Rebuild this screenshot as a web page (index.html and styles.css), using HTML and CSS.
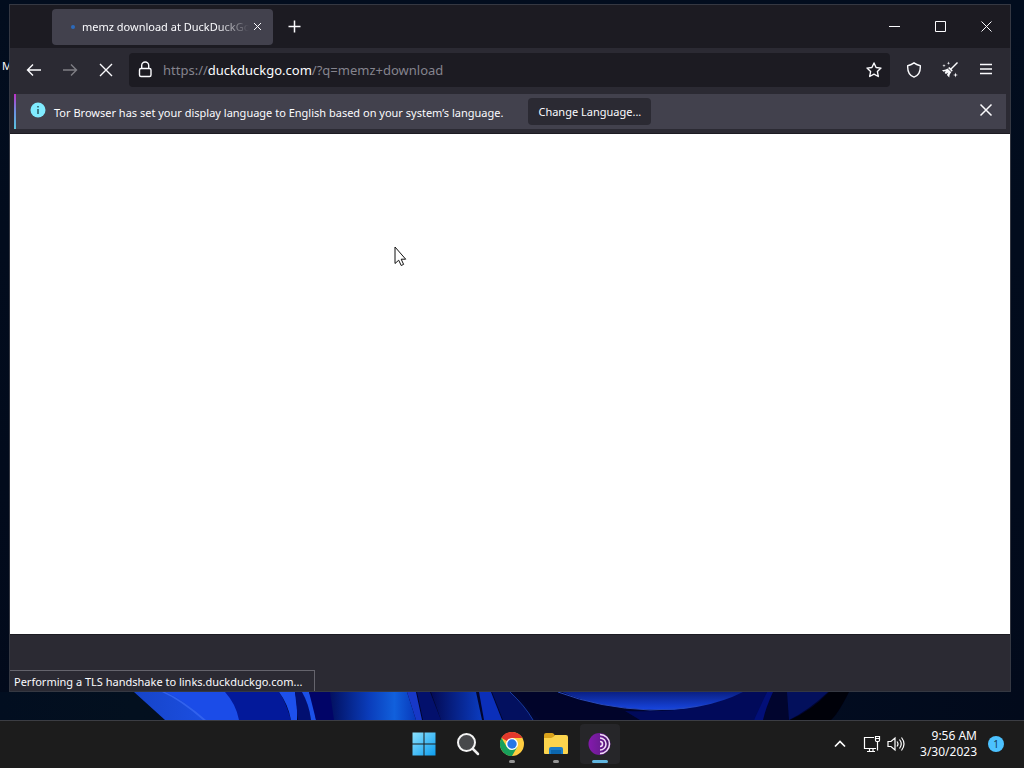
FILE: index.html
```html
<!DOCTYPE html>
<html lang="en">
<head>
<meta charset="utf-8">
<title>memz download at DuckDuckGo</title>
<link rel="stylesheet" href="styles.css">
</head>
<body>
<main class="desktop">
  <svg class="wallpaper" viewBox="0 0 1024 28" preserveAspectRatio="none" aria-hidden="true">
    <defs>
      <linearGradient id="sky"><stop offset="0" stop-color="#020e20"/><stop offset=".13" stop-color="#03101f"/><stop offset=".8" stop-color="#020c20"/><stop offset="1" stop-color="#020a1b"/></linearGradient>
      <linearGradient id="p1"><stop offset="0" stop-color="#1644c8"/><stop offset="1" stop-color="#1f55f0"/></linearGradient>
      <linearGradient id="p2"><stop offset="0" stop-color="#021060"/><stop offset=".45" stop-color="#0a3cba"/><stop offset=".75" stop-color="#1160dc"/><stop offset="1" stop-color="#0838ba"/></linearGradient>
      <linearGradient id="p3"><stop offset="0" stop-color="#030a54"/><stop offset="1" stop-color="#0b3cc0"/></linearGradient>
      <linearGradient id="p4" x2="0" y2="1"><stop offset="0" stop-color="#0a2084"/><stop offset="1" stop-color="#1746e2"/></linearGradient>
    </defs>
    <rect width="1024" height="28" fill="url(#sky)"/>
    <path d="M134 0H849Q838 22 831 28H165Z" fill="#01052e"/>
    <path d="M134 0H240L248 28H165Z" fill="url(#p1)"/>
    <path d="M166 0H225Q235 10 240 28H205Q184 8 166 0Z" fill="#1b4ce8"/>
    <path d="M165 0Q183 8 206 28H203Q180 8 162 0Z" fill="#3262ee"/>
    <path d="M225 0H279Q286 10 291 28H239Q236 12 225 0Z" fill="#03199a"/>
    <path d="M279 0H295Q298 14 297 28H291Q288 12 279 0Z" fill="#1d50ec"/>
    <path d="M295 0H303Q309 12 311 28H298Z" fill="#020f70"/>
    <path d="M302 0H309Q315 14 316 28H311Q309 12 302 0Z" fill="#1b50e8"/>
    <path d="M309 0H340V28H316Z" fill="#010467"/>
    <path d="M330 0H407L416 28H334Z" fill="url(#p2)"/>
    <path d="M407 0H416L422 28H416Z" fill="#1738c8"/>
    <path d="M417 0H430L441 28H423Z" fill="#03106c"/>
    <path d="M431 0H476L482 28H441Z" fill="url(#p3)"/>
    <path d="M479 0H491L502 28H484Z" fill="#0b2fba"/>
    <path d="M492 0H510Q525 15 533 28H503Z" fill="#03105f"/>
    <path d="M510 0Q525 14 533 28" fill="none" stroke="#173ba0"/>
    <path d="M555 0Q590 16 640 16V28H540L515 0Z" fill="#01042a"/>
    <path d="M562 0H756Q716 18 660 18Q600 17 562 0Z" fill="url(#p4)"/>
    <path d="M558 0Q600 16 650 18Q706 18 756 0" fill="none" stroke="#2848b8"/>
    <path d="M625 19Q700 22 743 0H767Q764 16 754 28H640Z" fill="#010a5a"/>
    <path d="M767 0H773Q766 15 763 28H754Z" fill="#020f78"/>
    <path d="M787 0H828Q809 18 789 28Z" fill="#03105c"/>
    <path d="M829 0H849Q838 22 831 28H790Q812 18 829 0Z" fill="#000109"/>
  </svg>
  <span class="shortcut">M</span>

  <section class="window" aria-label="Tor Browser">
    <header class="tabstrip">
      <div class="tab">
        <span class="loading"></span>
        <span class="tab-title">memz download at DuckDuckGo</span>
        <button class="tab-close" aria-label="Close tab"><svg width="9" height="9" viewBox="0 0 9 9"><path d="M1 1l7 7M8 1l-7 7"/></svg></button>
      </div>
      <button class="new-tab" aria-label="New tab"><svg width="13" height="13" viewBox="0 0 13 13"><path d="M6.500 .5v12M.5 6.500h12"/></svg></button>
      <div class="caption">
        <button aria-label="Minimize"><svg width="11" height="11" viewBox="0 0 11 11"><path d="M0 5.500h11"/></svg></button>
        <button aria-label="Maximize"><svg width="11" height="11" viewBox="0 0 11 11"><path d="M.5 .5h10v10H.5z"/></svg></button>
        <button aria-label="Close"><svg width="11" height="11" viewBox="0 0 11 11"><path d="M.5 .5l10 10M10.500 .5l-10 10"/></svg></button>
      </div>
    </header>

    <nav class="toolbar">
      <button class="tool" aria-label="Back"><svg width="16" height="16" viewBox="0 0 16 16"><path d="M15 8H1.500M7 2.500L1.500 8 7 13.500"/></svg></button>
      <button class="tool" aria-label="Forward" disabled><svg width="16" height="16" viewBox="0 0 16 16"><path d="M1 8h13.500M9 2.500L14.500 8 9 13.500"/></svg></button>
      <button class="tool" aria-label="Stop"><svg width="16" height="16" viewBox="0 0 16 16"><path d="M2 2l12 12M14 2L2 14"/></svg></button>
      <div class="urlbar">
        <button class="lock" aria-label="Site information"><svg width="16" height="18" viewBox="0 0 16 18"><rect x="2.500" y="7.500" width="11.500" height="8" rx="1.500"/><path d="M4.700 7.500V4.500a3.500 3.500 0 0 1 7 0v3"/></svg></button>
        <a class="url" href="https://duckduckgo.com/?q=memz+download">https://<span class="domain">duckduckgo.com</span>/?q=memz+download</a>
        <button class="star" aria-label="Bookmark this page"><svg width="16" height="16" viewBox="0 0 16 16"><path d="M8 1l2.100 4.500 4.900.6-3.600 3.400.9 5L8 12.200 3.700 14.500l.9-5L1 6.100l4.900-.6z"/></svg></button>
      </div>
      <button class="tool" aria-label="Security level"><svg width="16" height="16" viewBox="0 0 16 16"><path d="M8 .9C6.300 2.300 4 3.200 1.700 3.700c-.3 5.300 1.700 9.800 6.300 11.400 4.600-1.600 6.600-6.100 6.300-11.400C12 3.200 9.700 2.300 8 .9z"/></svg></button>
      <button class="tool" aria-label="New identity"><svg width="18" height="18" viewBox="0 0 18 18"><path d="M16.500 1.500L9.500 8.500"/><path class="solid" d="M6.500 7.500C5 8.500 3 9 1 9l1.500 1.700 2.200-.6-1 1.900 1.200 1.100 2.400-1.700-1.400 2.700L8.300 16.500c0-2.500.8-4 2-5.300zM7 7l3.800 3.800.9-1.400L8.500 6zM3 3l.4 1.300 1.300.4-1.300.4L3 6.400l-.4-1.300-1.300-.4 1.300-.4zM7.500 .5l.4 1.300 1.300.4-1.300.4-.4 1.300-.4-1.300-1.300-.4 1.300-.4zM14.500 11.500l.6 1.900 1.900.6-1.900.6-.6 1.900-.6-1.900L12 14l1.900-.6z"/></svg></button>
      <button class="tool" aria-label="Open menu"><svg class="lines" width="16" height="16" viewBox="0 0 16 16"><path d="M2 2.500h12M2 7h12M2 11.500h12"/></svg></button>
    </nav>

    <div class="notice">
      <svg class="info" width="16" height="16" viewBox="0 0 16 16"><circle cx="8" cy="8" r="7.500" fill="#80ebff"/><path d="M8 7v5M8 4v1.500" stroke="#24575f" stroke-width="1.500"/></svg>
      <span class="notice-text">Tor Browser has set your display language to English based on your system’s language.</span>
      <button class="change">Change Language...</button>
      <button class="dismiss" aria-label="Dismiss"><svg width="14" height="14" viewBox="0 0 14 14"><path d="M1.500 1.500l11 11M12.500 1.500l-11 11"/></svg></button>
    </div>

    <div class="page"></div>
    <footer class="letterbox"><output class="status">Performing a TLS handshake to links.duckduckgo.com...</output></footer>
    <svg class="cursor" width="14" height="21" viewBox="0 0 14 21"><path d="M1 1v16.500l3.700-3.300 2.500 5.300 2.400-1.100-2.400-5.200h4.500z" fill="#fff" stroke="#111"/></svg>
  </section>
</main>

<footer class="taskbar">
  <div class="apps">
    <button class="app" aria-label="Start"><svg width="24" height="24" viewBox="0 0 24 24"><defs><linearGradient id="win" x2="1" y2="1"><stop stop-color="#8be1fd"/><stop offset="1" stop-color="#0c9df0"/></linearGradient></defs><path fill="url(#win)" d="M.5 .5h11v11H.5zM12.500 .5h11v11h-11zM.5 12.500h11v11H.5zM12.500 12.500h11v11h-11z"/></svg></button>
    <button class="app" aria-label="Search"><svg width="24" height="24" viewBox="0 0 24 24"><path d="M17 17l5 5" stroke="#eee" stroke-width="2.500" stroke-linecap="round"/><circle cx="10.500" cy="10.500" r="8.500" fill="#47484b" stroke="#f4f4f4" stroke-width="2"/></svg></button>
    <button class="app running" aria-label="Google Chrome"><svg width="24" height="24" viewBox="0 0 24 24"><circle cx="12" cy="12" r="12" fill="#ffcd40"/><path d="M12 12L1.600 6A12 12 0 0 1 22.400 6H12z" fill="#e3382c"/><path d="M1.600 6A12 12 0 0 0 12 24l5.200-9H6.800z" fill="#18a05b"/><circle cx="12" cy="12" r="6" fill="#fff"/><circle cx="12" cy="12" r="4.700" fill="#2876e5"/></svg></button>
    <button class="app running" aria-label="File Explorer"><svg width="26" height="24" viewBox="0 0 26 24"><path d="M1 7V3q0-2 2-2h6q1 0 2 1l1 2v3z" fill="#d9a21b"/><path d="M1 6h7q2 0 4-3h11q2 0 2 2v16q0 1-1 1H2q-1 0-1-1z" fill="#fbd44d"/><path d="M6 22v-5q0-2 2-2h10q2 0 2 2v5z" fill="#1a7cc8"/><path d="M8 18h10v4H8z" fill="#0b66ad"/></svg></button>
    <button class="app active" aria-label="Tor Browser"><svg width="24" height="24" viewBox="0 0 24 24"><defs><linearGradient id="tor"><stop stop-color="#8419ad"/><stop offset=".5" stop-color="#6e1c96"/><stop offset="1" stop-color="#3f105f"/></linearGradient></defs><circle cx="11.500" cy="12" r="11" fill="url(#tor)"/><path d="M12 2.500a9.500 9.500 0 0 1 0 19M12 6a6 6 0 0 1 0 12M12 9.500a2.500 2.500 0 0 1 0 5" fill="none" stroke="#f0dcf6" stroke-width="1.600"/></svg></button>
  </div>
  <div class="tray">
    <button class="tray-item" aria-label="Show hidden icons"><svg width="12" height="8" viewBox="0 0 12 8"><path d="M1 6.500l5-5 5 5" stroke-width="1.700"/></svg></button>
    <button class="tray-item system" aria-label="Network and volume">
      <svg width="18" height="18" viewBox="0 0 18 18"><path d="M11 2.500H1.500v11H13M4 16.500h8M6.500 13.500v3M10 13.500v3M14.500 7v8.500M12.500 1.500h4V5q0 1.500-1 1.500h-2q-1 0-1-1.500zM12.500 3.500h4"/></svg>
      <svg width="18" height="16" viewBox="0 0 18 16"><path d="M1 5.500h3L8 2v12l-4-3.500H1zM10 5.500q2 2.500 0 5M12.500 3.500q3.500 4.500 0 9M14.500 1.500q5 6.500 0 13"/></svg>
    </button>
    <button class="clock"><time datetime="2023-03-30T09:56">9:56 AM<br>3/30/2023</time></button>
    <button class="badge" aria-label="1 notification">1</button>
  </div>
</footer>
</body>
</html>
```
FILE: styles.css
```css
* { box-sizing: border-box; }

body {
  margin: 0;
  min-height: 100vh;
  display: flex;
  flex-direction: column;
  background: #020b1c;
  color: #fbfbfe;
  font: 11px/16px "Noto Sans", "Open Sans", sans-serif;
}

button {
  display: flex;
  align-items: center;
  justify-content: center;
  flex: none;
  margin: 0;
  padding: 0;
  border: 0;
  background: none;
  color: inherit;
  font: inherit;
}

svg { display: block; flex: none; fill: none; stroke: none; }

.desktop {
  position: relative;
  flex: 1;
  display: flex;
  padding: 4px 13px 28px 9px;
  overflow: hidden;
  background: linear-gradient(#020d1e, #020a1b);
}

.wallpaper { position: absolute; left: 0; bottom: 0; width: 100%; height: 28px; }
.shortcut { position: absolute; left: 2px; top: 58px; }

.window {
  position: relative;
  flex: 1;
  min-width: 0;
  display: flex;
  flex-direction: column;
  border: 1px solid #353842;
  background: #2b2a33;
}

.window button svg { stroke: #fbfbfe; }

.tabstrip { display: flex; align-items: center; height: 43px; padding-left: 42px; background: #1c1b22; }

.tab {
  display: flex;
  align-items: center;
  width: 221px;
  height: 36px;
  padding: 0 8px 0 19px;
  border-radius: 4px;
  background: #42414d;
}

.loading { width: 4px; height: 4px; border-radius: 50%; background: #2b69bb; }

.tab-title {
  flex: 1;
  margin-left: 7px;
  overflow: hidden;
  white-space: nowrap;
  mask-image: linear-gradient(to left, transparent, #000 32px);
}

.tab-close { width: 16px; height: 16px; }
.new-tab { width: 32px; height: 32px; margin-left: 5px; }
.new-tab svg { stroke-width: 1.5; }
.caption { display: flex; align-self: stretch; margin-left: auto; padding-right: 1px; }
.caption button { width: 46px; }

.toolbar { display: flex; align-items: center; height: 43px; padding: 0 8px; gap: 4px; }
.tool { width: 32px; height: 32px; }
.window .tool svg { stroke-width: 1.4; }
.window .tool .lines { stroke-width: 1.5; }
.tool:disabled { opacity: .4; }
.window .solid { fill: #fbfbfe; stroke: none; }

.urlbar {
  flex: 1;
  min-width: 0;
  display: flex;
  align-items: center;
  height: 34px;
  margin: 0 4px 0 3px;
  padding: 0 8px;
  border-radius: 4px;
  background: #1c1b22;
}

.window .lock svg, .window .star svg { stroke-width: 1.4; stroke-linejoin: round; }
.url { flex: 1; margin-left: 10px; overflow: hidden; color: #85848e; font-size: 13px; line-height: 20px; text-decoration: none; white-space: nowrap; }
.domain { color: #fbfbfe; }

.notice {
  display: flex;
  align-items: center;
  height: 35px;
  margin: 3px 4px 4px;
  padding: 0 12px 0 14px;
  border-left: 2px solid;
  border-image: linear-gradient(#c42bc7, #6b8fe0, #58c8dc) 1;
  background: #42414d;
}

.info, .dismiss { margin-bottom: 4px; }
.notice-text { margin-left: 8px; padding-top: 2px; }
.change { height: 27px; margin-left: 25px; padding: 0 10px; border-radius: 4px; background: #2b2a33; }
.dismiss { width: 16px; height: 16px; margin-left: auto; }
.dismiss svg { stroke-width: 1.5; }

.page { flex: 1; border-top: 1px solid #1c1b22; background: #fff; }
.letterbox { display: flex; align-items: flex-end; height: 57px; border-top: 1px solid #1c1b22; }
.status { padding: 3px 12px 1px 4px; border: 1px solid #65646d; border-width: 1px 1px 0 0; background: #2b2a33; }
.cursor { position: absolute; left: 384px; top: 241px; }

.taskbar {
  display: grid;
  grid-template-columns: 1fr auto 1fr;
  align-items: center;
  height: 48px;
  border-top: 1px solid #3b3d43;
  background: #1c1c1c;
}

.apps { grid-column: 2; display: flex; gap: 4px; margin-bottom: 1px; }
.app { position: relative; width: 40px; height: 40px; border-radius: 4px; }
.app.active { background: #262629; }
.app.running::after, .app.active::after {
  content: "";
  position: absolute;
  bottom: 1px;
  left: 50%;
  width: 6px;
  height: 3px;
  border-radius: 2px;
  background: #959595;
  transform: translateX(-50%);
}
.app.active::after { width: 16px; background: #60b6e0; }

.tray { display: flex; align-items: center; justify-self: end; padding-right: 20px; margin-bottom: 2px; }
.tray-item svg { stroke: #fff; stroke-width: 1.2; }
.system { gap: 6px; margin: 0 15px 0 17px; }
.clock { text-align: right; font-size: 12px; }
.badge { width: 16px; height: 16px; margin-left: 11px; border-radius: 50%; background: #4cc2ff; color: #123c55; font-size: 10px; }
```
